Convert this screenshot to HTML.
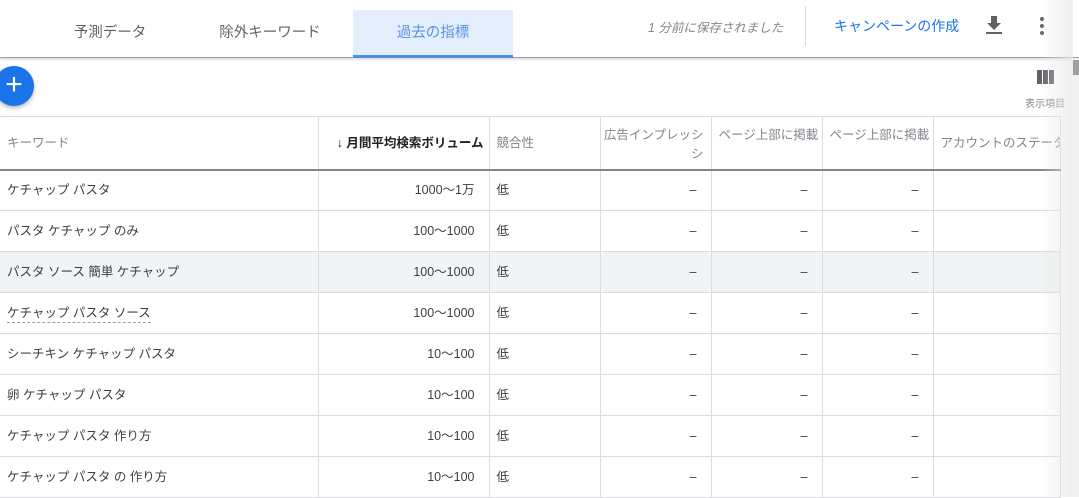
<!DOCTYPE html>
<html><head><meta charset="utf-8"><style>
*{box-sizing:border-box;margin:0;padding:0}
body{width:1079px;height:497px;overflow:hidden;background:#fff;font-family:"Liberation Sans","Noto Sans CJK JP",sans-serif;position:relative;color:#3c4043}
.top{position:absolute;left:0;top:0;width:1079px;height:58px;border-bottom:1px solid #9aa0a6;box-shadow:0 1px 3px rgba(0,0,0,.2)}
.tab{position:absolute;top:10px;height:48px;line-height:46px;text-align:center;font-size:14.5px;color:#5f6368}
.tab.act{background:#e3edfb;color:#5b95e6;border-bottom:3px solid #4d8ee8}
.abs{position:absolute}
table{position:absolute;left:0;top:116px;border-collapse:collapse;font-size:12.5px;table-layout:fixed;width:1060px}
td,th{border-right:1px solid #dadce0;border-bottom:1px solid #dadce0;height:41px;padding:0 7px;white-space:nowrap;overflow:hidden;font-weight:normal;line-height:16px}
th{height:53px;color:#80868b;font-size:12.5px;border-top:1px solid #dadce0;border-bottom:2px solid #80868b;padding:0}
th .h{height:50px;overflow:hidden;padding:0 7px;display:flex;align-items:center}
th .t{align-items:flex-start;padding-top:8px;line-height:19px}
td{color:#3c4043}
.r{text-align:right;padding-right:14px}
.hl td{background:#f1f3f4}
</style></head><body>
<div class="top">
<div class="tab" style="left:40px;width:140px">予測データ</div>
<div class="tab" style="left:200px;width:140px">除外キーワード</div>
<div class="tab act" style="left:353px;width:160px">過去の指標</div>
<div class="abs" style="left:648px;top:17px;font-size:12.5px;color:#80868b;font-style:italic">1 分前に保存されました</div>
<div class="abs" style="left:805px;top:6px;width:1px;height:40px;background:#dadce0"></div>
<div class="abs" style="left:834px;top:16px;font-size:14px;color:#1a73e8">キャンペーンの作成</div>
<svg class="abs" style="left:984px;top:15px" width="20" height="20" viewBox="0 0 20 20"><path d="M7 1h6v7h4l-7 7-7-7h4z M2 17h16v2H2z" fill="#5f6368"/></svg>
<svg class="abs" style="left:1038px;top:16px" width="8" height="20"><circle cx="4" cy="3" r="2" fill="#5f6368"/><circle cx="4" cy="10" r="2" fill="#5f6368"/><circle cx="4" cy="17" r="2" fill="#5f6368"/></svg>
</div>
<div class="abs" style="left:-6px;top:66px;width:40px;height:40px;border-radius:50%;background:#1a73e8;box-shadow:0 2px 4px rgba(0,0,0,.3);color:#fff;font-size:30px;line-height:38px;text-align:center">+</div>
<svg class="abs" style="left:1037px;top:70px" width="18" height="14"><rect x="0" y="0" width="5" height="14" fill="#5f6368"/><rect x="6" y="0" width="5" height="14" fill="#5f6368"/><rect x="12" y="0" width="5" height="14" fill="#5f6368"/></svg>
<div class="abs" style="left:1025px;top:95px;font-size:10px;color:#80868b">表示項目</div>
<table>
<colgroup><col style="width:318px"><col style="width:171px"><col style="width:111px"><col style="width:111px"><col style="width:111px"><col style="width:111px"><col style="width:127px"></colgroup>
<tr><th><div class="h">キーワード</div></th><th><div class="h" style="justify-content:flex-end;color:#202124;font-weight:bold;padding-right:5px">↓ 月間平均検索ボリューム</div></th><th><div class="h">競合性</div></th><th><div class="h t" style="justify-content:flex-end;text-align:right">広告インプレッシ<br>シ</div></th><th><div class="h t">ページ上部に掲載</div></th><th><div class="h t">ページ上部に掲載</div></th><th><div class="h">アカウントのステータ</div></th></tr>
<tr><td>ケチャップ パスタ</td><td class="r">1000〜1万</td><td>低</td><td class="r">–</td><td class="r">–</td><td class="r">–</td><td></td></tr>
<tr><td>パスタ ケチャップ のみ</td><td class="r">100〜1000</td><td>低</td><td class="r">–</td><td class="r">–</td><td class="r">–</td><td></td></tr>
<tr class="hl"><td>パスタ ソース 簡単 ケチャップ</td><td class="r">100〜1000</td><td>低</td><td class="r">–</td><td class="r">–</td><td class="r">–</td><td></td></tr>
<tr><td><span style="border-bottom:1px dashed #9aa0a6;padding-bottom:2px">ケチャップ パスタ ソース</span></td><td class="r">100〜1000</td><td>低</td><td class="r">–</td><td class="r">–</td><td class="r">–</td><td></td></tr>
<tr><td>シーチキン ケチャップ パスタ</td><td class="r">10〜100</td><td>低</td><td class="r">–</td><td class="r">–</td><td class="r">–</td><td></td></tr>
<tr><td>卵 ケチャップ パスタ</td><td class="r">10〜100</td><td>低</td><td class="r">–</td><td class="r">–</td><td class="r">–</td><td></td></tr>
<tr><td>ケチャップ パスタ 作り方</td><td class="r">10〜100</td><td>低</td><td class="r">–</td><td class="r">–</td><td class="r">–</td><td></td></tr>
<tr><td>ケチャップ パスタ の 作り方</td><td class="r">10〜100</td><td>低</td><td class="r">–</td><td class="r">–</td><td class="r">–</td><td></td></tr>
</table>
<div class="abs" style="left:1040px;top:0;width:33px;height:497px;background:linear-gradient(to right,rgba(255,255,255,0),rgba(230,230,230,.7))"></div>
<div class="abs" style="left:1073px;top:58px;width:6px;height:439px;background:#f1f1f1"></div>
<div class="abs" style="left:1073px;top:60px;width:6px;height:15px;background:#a0a0a0"></div>
</body></html>
